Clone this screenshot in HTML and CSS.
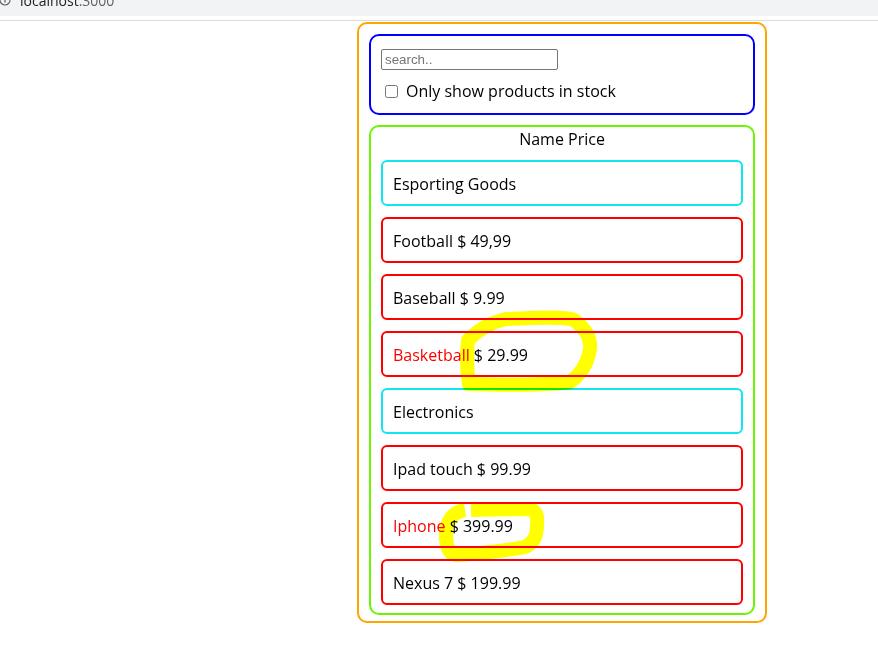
FILE: index.html
```html
<!DOCTYPE html>
<html lang="en">
<head>
<meta charset="utf-8">
<title>React App</title>
<link rel="stylesheet" href="styles.css">
</head>
<body>
<div class="chrome">
  <div class="chrome-bar">
    <svg class="info-icon" width="12" height="12" viewBox="0 0 12 12" aria-hidden="true">
      <circle cx="5" cy="6" r="5" fill="none" stroke="#5f6368" stroke-width="1.2"/>
      <rect x="4.4" y="5" width="1.2" height="3.6" fill="#5f6368"/>
      <rect x="4.4" y="3" width="1.2" height="1.2" fill="#5f6368"/>
    </svg>
    <span class="url"><span class="host">localhost</span><span class="port">:3000</span></span>
  </div>
</div>

<div class="app">
  <div class="search-bar">
    <input class="search-input" type="text" placeholder="search..">
    <label class="stock">
      <input class="stock-check" type="checkbox">
      <span>Only show products in stock</span>
    </label>
  </div>

  <div class="product-table">
    <div class="table-head">Name Price</div>
    <div class="rows">
      <div class="row category">Esporting Goods</div>
      <div class="row">Football $ 49,99</div>
      <div class="row">Baseball $ 9.99</div>
      <div class="row"><span class="out">Basketball</span> $ 29.99</div>
      <div class="row category">Electronics</div>
      <div class="row">Ipad touch $ 99.99</div>
      <div class="row"><span class="out">Iphone</span> $ 399.99</div>
      <div class="row">Nexus 7 $ 199.99</div>
    </div>
  </div>
</div>

<svg class="scribbles" width="878" height="654" viewBox="0 0 878 654" aria-hidden="true">
  <path d="M 506 319 C 535 318, 562 316, 574 320 C 585 328, 591 338, 590 349 C 588 362, 583 373, 570 382 C 540 386, 500 385, 469 384 C 467 372, 467 352, 468 340 C 478 330, 492 322, 506 319 Z"
        fill="none" stroke="#ffff00" stroke-width="14" stroke-linejoin="round"/>
  <path d="M 471 510 L 528 509 C 536 510, 538 516, 537 525 C 537 535, 535 542, 525 547 C 505 551, 480 553, 458 555 C 449 555, 446 547, 446 535 C 446 522, 452 512, 465 510"
        fill="none" stroke="#ffff00" stroke-width="14" stroke-linejoin="round"/>
</svg>
</body>
</html>
```

FILE: styles.css
```css
html, body {
  margin: 0;
  padding: 0;
  background: #ffffff;
}

body {
  font-family: "Open Sans", "Noto Sans", sans-serif;
  color: #000000;
  position: relative;
  width: 878px;
  height: 654px;
  overflow: hidden;
}

/* fake browser chrome at top */
.chrome {
  height: 20px;
  border-bottom: 1px solid #dadce0;
}

.chrome-bar {
  height: 16px;
  background: #f1f3f4;
  display: flex;
  align-items: flex-start;
  overflow: hidden;
}

.info-icon {
  margin: -6px 0 0 0;
  flex: none;
}

.url {
  margin: -6px 0 0 8px;
  font-family: "Open Sans", sans-serif;
  font-size: 14px;
  line-height: 14px;
  white-space: nowrap;
}

.host {
  color: #202124;
}

.port {
  color: #5f6368;
}

/* app */
.app {
  box-sizing: border-box;
  width: 410px;
  margin: 1px 0 0 357px;
  border: 2px solid #ffa500;
  border-radius: 10px;
  padding: 10px 10px 6px;
}

.search-bar {
  border: 2px solid #0000ff;
  border-radius: 10px;
  padding: 10px 10px 11px;
}

.search-input {
  display: block;
  box-sizing: border-box;
  width: 177px;
  height: 21px;
  margin: 3px 0 0;
  padding: 1px 3px;
  border: 1px solid #767676;
  border-radius: 2px;
  font-family: "Liberation Sans", Arial, sans-serif;
  font-size: 13.33px;
  color: #000;
}

.search-input::placeholder {
  color: #757575;
}

.stock {
  display: flex;
  align-items: center;
  height: 22px;
  margin-top: 10px;
  font-size: 16px;
  line-height: 22px;
}

.stock-check {
  width: 13px;
  height: 13px;
  margin: 0 8px 0 4px;
}

.product-table {
  margin-top: 10px;
  border: 2px solid #6cf500;
  border-radius: 10px;
  padding: 0 10px 8px;
}

.table-head {
  text-align: center;
  font-size: 16px;
  line-height: 22px;
  padding-top: 1px;
}

.rows {
  display: flex;
  flex-direction: column;
  gap: 11px;
  margin-top: 10px;
}

.row {
  border: 2px solid #ff0000;
  border-radius: 6px;
  padding: 11px 10px 9px;
  font-size: 16px;
  line-height: 22px;
}

.row.category {
  border-color: #11e6ee;
}

.out {
  color: #ff0000;
}

.scribbles {
  position: absolute;
  top: 0;
  left: 0;
  pointer-events: none;
  mix-blend-mode: multiply;
}
```
